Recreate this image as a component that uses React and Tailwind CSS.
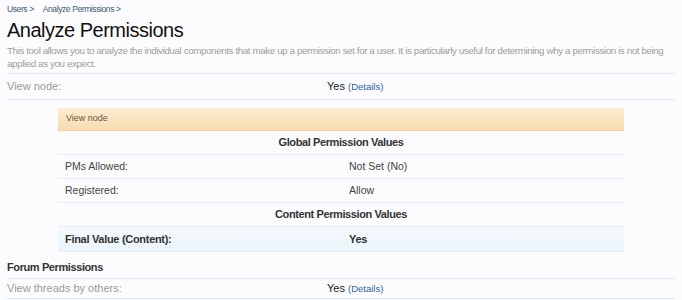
const font = { fontFamily: '"Liberation Sans", Arial, sans-serif' };

function OuterRow({ label, children, short }) {
  return (
    <div
      className={
        "flex items-center border-b border-[#dbe9f5] text-[11px] " +
        (short ? "h-[20px]" : "h-[26px]")
      }
    >
      <div className="w-[320px] text-[#9a9a9a]">{label}</div>
      <div className="text-[#222]">{children}</div>
    </div>
  );
}

function Details() {
  return <span className="text-[9.5px] text-[#2a6496]">(Details)</span>;
}

function InnerRow({ label, value, bold, shaded }) {
  return (
    <div
      className={
        "flex items-center border-b border-[#e4eff8] " +
        (shaded
          ? "bg-gradient-to-b from-[#f4f9fd] to-[#ebf5fb] h-[25px] "
          : "h-[24px] ") +
        (bold
          ? "font-bold text-[11px] tracking-[-0.3px] text-[#333]"
          : "text-[10.5px] text-[#444]")
      }
    >
      <div className="w-[291px] pl-[7px]">{label}</div>
      <div>{value}</div>
    </div>
  );
}

function InnerHeader({ children }) {
  return (
    <div className="flex items-center justify-center h-[24px] border-b border-[#e4eff8] text-[11px] tracking-[-0.4px] font-bold text-[#333]">
      {children}
    </div>
  );
}

export default function App() {
  return (
    <div className="w-[682px] h-[300px] overflow-hidden bg-[#fcfcfe] px-[7px]" style={font}>
      <div className="pt-[3px] h-[14px] text-[8.5px] tracking-[-0.4px] text-[#3c5a72] flex gap-[9px] leading-[12px]">
        <span>Users &gt;</span>
        <span>Analyze Permissions &gt;</span>
      </div>
      <h1 className="text-[20px] leading-[26px] tracking-[-0.5px] text-[#111] mt-[3px]">
        Analyze Permissions
      </h1>
      <p className="text-[9.8px] tracking-[-0.4px] leading-[13px] text-[#9c9c9c] mt-[1px]">
        This tool allows you to analyze the individual components that make up a permission set for a user. It is particularly useful for determining why a permission is not being applied as you expect.
      </p>
      <div className="border-b border-[#dbe9f5] mt-[3px]" />
      <OuterRow label="View node:">
        Yes <Details />
      </OuterRow>
      <div className="mx-[51px] mt-[8px]">
        <div className="h-[23px] flex items-center pl-[8px] text-[9px] text-[#6a5a40] bg-gradient-to-b from-[#fcebd0] to-[#f8dcb0] border-b border-[#f0d3a8]">
          View node
        </div>
        <InnerHeader>Global Permission Values</InnerHeader>
        <InnerRow label="PMs Allowed:" value="Not Set (No)" />
        <InnerRow label="Registered:" value="Allow" />
        <InnerHeader>Content Permission Values</InnerHeader>
        <InnerRow label="Final Value (Content):" value="Yes" bold shaded />
      </div>
      <div className="h-[26px] mt-[1px] flex items-end pb-[3px] border-b border-[#dbe9f5] text-[11px] tracking-[-0.4px] font-bold text-[#333]">
        Forum Permissions
      </div>
      <OuterRow label="View threads by others:" short>
        Yes <Details />
      </OuterRow>
    </div>
  );
}
